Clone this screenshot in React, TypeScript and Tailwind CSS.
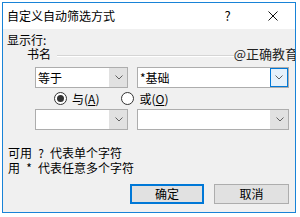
import React from 'react';

const font = { fontFamily: '"Noto Sans CJK SC", "Liberation Sans", sans-serif' };

function Chevron() {
  return (
    <svg width="8" height="5" viewBox="0 0 8 5" className="block">
      <polyline points="0.5,0.5 4,4 7.5,0.5" fill="none" stroke="#606060" strokeWidth="1" />
    </svg>
  );
}

function Combo({ width, text, active }: { width: string; text?: string; active?: boolean }) {
  return (
    <div className={`${width} h-[21px] flex border border-[#adadad] bg-white`}>
      <div className="flex-1 flex items-center pl-[2px] text-[12px] leading-none text-black overflow-hidden whitespace-nowrap">
        {text}
      </div>
      <div
        className={
          active
            ? 'w-[18px] h-full flex items-center justify-center border border-[#0078d7] bg-[#e5f1fb]'
            : 'w-[18px] h-full flex items-center justify-center border-l border-[#e1e1e1] bg-[#e1e1e1]'
        }
      >
        <Chevron />
      </div>
    </div>
  );
}

function Radio({ checked, label, hot }: { checked?: boolean; label: string; hot: string }) {
  return (
    <div className="flex items-center gap-[5px]">
      <div className="w-[13px] h-[13px] rounded-full border border-[#333] bg-white flex items-center justify-center">
        {checked && <div className="w-[7px] h-[7px] rounded-full bg-[#333]" />}
      </div>
      <span className="text-[12px] leading-[13px] text-black">
        {label}(<span className="underline">{hot}</span>)
      </span>
    </div>
  );
}

export default function App() {
  return (
    <div className="w-[300px] h-[217px] bg-white overflow-hidden pl-[2px] pt-[2px]" style={font}>
      <div className="w-[294px] h-[211px] border border-[#1883d7] flex flex-col overflow-hidden">
        <div className="h-[26px] bg-white flex items-center justify-between shrink-0">
          <span className="pl-[4px] text-[12px] leading-none text-black">自定义自动筛选方式</span>
          <div className="flex h-full">
            <div className="w-[45px] h-full flex items-center justify-center text-[13px] text-black">?</div>
            <div className="w-[45px] h-full flex items-center justify-center">
              <svg width="10" height="10" viewBox="0 0 10 10">
                <line x1="0.5" y1="0.5" x2="9.5" y2="9.5" stroke="#111" strokeWidth="1" />
                <line x1="9.5" y1="0.5" x2="0.5" y2="9.5" stroke="#111" strokeWidth="1" />
              </svg>
            </div>
          </div>
        </div>

        <div className="flex-1 bg-[#f0f0f0] flex flex-col text-[12px] text-black">
          <div className="pt-[4px] pl-[4px] h-[17px] leading-[13px]">显示行:</div>

          <div className="flex items-start h-[15px] pl-[24px]">
            <span className="leading-[14px] mt-[1px]">书名</span>
            <div className="flex-1 ml-[6px] mt-[9px] h-[2px] border-t border-[#d5d5d5] border-b border-b-white" />
            <span className="text-[13px] leading-[14px] text-[#222] whitespace-nowrap mt-[1px] mr-[-3px]">@正确教育</span>
          </div>

          <div className="flex gap-[9px] pl-[32px] mt-[6px]">
            <Combo width="w-[93px]" text="等于" />
            <Combo width="w-[152px]" text="*基础" active />
          </div>

          <div className="flex items-center gap-[22px] pl-[51px] mt-[4px] h-[13px]">
            <Radio checked label="与" hot="A" />
            <Radio label="或" hot="O" />
          </div>

          <div className="flex gap-[9px] pl-[32px] mt-[4px]">
            <Combo width="w-[93px]" />
            <Combo width="w-[152px]" />
          </div>

          <div className="pl-[5px] mt-[15px] leading-[15px]">
            <div className="flex">
              可用<span className="w-[18px] text-center">?</span>代表单个字符
            </div>
            <div className="flex">
              用<span className="w-[18px] text-center">*</span>代表任意多个字符
            </div>
          </div>

          <div className="flex justify-end gap-[10px] pr-[6px] mt-[9px]">
            <button className="w-[74px] h-[20px] border-2 border-[#0078d7] bg-[#e1e1e1] text-[12px] leading-none text-black">
              确定
            </button>
            <button className="w-[75px] h-[20px] border border-[#adadad] bg-[#e1e1e1] text-[12px] leading-none text-black">
              取消
            </button>
          </div>
        </div>
      </div>
    </div>
  );
}
